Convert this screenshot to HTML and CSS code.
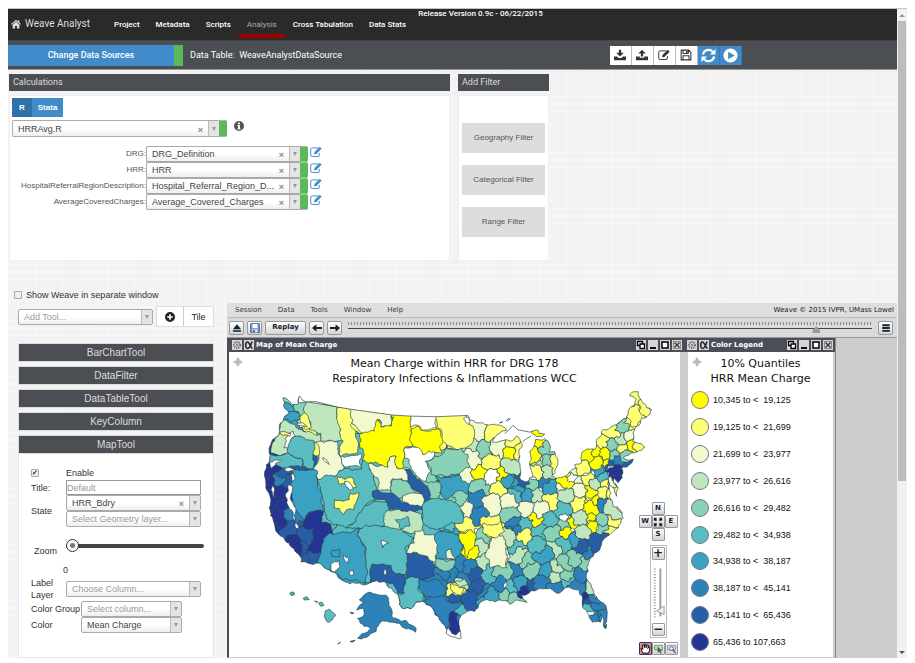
FILE: index.html
```html
<!DOCTYPE html>
<html lang="en">
<head>
<meta charset="utf-8">
<title>Weave Analyst</title>
<link rel="stylesheet" href="styles.css">
</head>
<body>
<svg class="defs" aria-hidden="true">
  <symbol id="i-home" viewBox="0 0 16 16"><path d="M8 1 0 8l1 1.3L8 3.400l7 5.900L16 8l-2.500-2.200V2h-2v2z"/><path d="M8 4.500 2.500 9v6H6.500v-4h3v4h4V9z"/></symbol>
  <symbol id="i-down" viewBox="0 0 16 16"><path d="M6.500 1h3v4H13L8 10 3 5h3.500z"/><path d="M0 10h4l2 2h4l2-2h4v5H0z"/></symbol>
  <symbol id="i-up" viewBox="0 0 16 16"><path d="M6.500 10h3V6H13L8 1 3 6h3.500z"/><path d="M0 10h5v1.500h6V10h5v5H0z"/></symbol>
  <symbol id="i-edit" viewBox="0 0 16 16"><path d="M11 2.500H3Q1 2.500 1 4.500v7.500q0 2 2 2h7.500q2 0 2-2V9.500" fill="none" stroke="currentColor" stroke-width="1.300"/><path d="M6 8 13 1l2.500 2.500-7 7L5.500 11z"/></symbol>
  <symbol id="i-save" viewBox="0 0 16 16"><path d="M1.500 1.500h10l3 3v10h-13zM4 14V9h8v5M4 2v4h7V2" fill="none" stroke="currentColor" stroke-width="1.400"/><path d="M8 2.500h2v3H8z"/></symbol>
  <symbol id="i-refresh" viewBox="0 0 16 16"><path d="M2 7a6.200 6.200 0 0 1 11-2.600M14 9a6.200 6.200 0 0 1-11 2.600" fill="none" stroke="currentColor" stroke-width="2.300"/><path d="M15.500 1v6H9.500zM.500 15V9h6z"/></symbol>
  <symbol id="i-play" viewBox="0 0 16 16"><path fill-rule="evenodd" d="M8 .500a7.500 7.500 0 1 0 0 15 7.500 7.500 0 0 0 0-15zM5.500 4v8l7-4z"/></symbol>
  <symbol id="i-info" viewBox="0 0 16 16"><path fill-rule="evenodd" d="M8 0a8 8 0 1 0 0 16A8 8 0 0 0 8 0zM6.500 2.500h3V5h-3zM5.500 6.500h4V12h1v1.500h-5V12h1V8h-1z"/></symbol>
  <symbol id="i-plus" viewBox="0 0 16 16"><path fill-rule="evenodd" d="M8 0a8 8 0 1 0 0 16A8 8 0 0 0 8 0zM6.700 3.500h2.600v3.200h3.200v2.600H9.300v3.200H6.700V9.300H3.500V6.700h3.200z"/></symbol>
  <symbol id="i-eject" viewBox="0 0 16 16"><path d="M8 2 14.500 10h-13zM1.500 11.500h13V14h-13z"/></symbol>
  <symbol id="i-disk" viewBox="0 0 16 16"><path d="M1 1h14v14H1z" fill="#7d9dca" stroke="#446499" stroke-width="1.500"/><path d="M4 1.500h8V8H4z" fill="#fff"/><path d="M4 10h8v5H4z" fill="#dfe6f0"/><path d="M5 11h3v4H5z" fill="#446499"/></symbol>
  <symbol id="i-left" viewBox="0 0 16 16"><path d="M0 8 7 2v4.500h9v3H7V14z"/></symbol>
  <symbol id="i-right" viewBox="0 0 16 16"><path d="M16 8 9 2v4.500H0v3h9V14z"/></symbol>
  <symbol id="i-menu" viewBox="0 0 16 16"><path d="M2 2h12v3H2zM2 6.500h12v3H2zM2 11h12v3H2z"/></symbol>
  <symbol id="i-gear" viewBox="0 0 10 10"><circle cx="5" cy="5" r="3" fill="none" stroke="#666" stroke-width="2" stroke-dasharray="1.200 1"/><circle cx="5" cy="5" r="1.200" fill="#888"/></symbol>
  <symbol id="i-alpha" viewBox="0 0 10 10"><path d="M8 1.500C7 5 6 8.500 3.500 8.500S1.200 2 3.500 2 6.500 8 8.500 8.500" fill="none" stroke="#222" stroke-width="1.500"/></symbol>
  <symbol id="i-copy" viewBox="0 0 10 10"><path d="M1.500 1.500h5v4h-5z" fill="#fff" stroke="#000" stroke-width="1.300"/><path d="M4 4h4.500v4.500H4z" fill="#fff" stroke="#000" stroke-width="1.300"/></symbol>
  <symbol id="i-min" viewBox="0 0 10 10"><path d="M2 7h6v2H2z"/></symbol>
  <symbol id="i-max" viewBox="0 0 10 10"><path d="M2 2h6v6H2z" fill="#fff" stroke="#000" stroke-width="1.500"/></symbol>
  <symbol id="i-close" viewBox="0 0 10 10"><path d="M1.500 1.500h7v7h-7z" fill="none" stroke="#444" stroke-dasharray="1 1"/><path d="m2.500 2.500 5 5M7.500 2.500l-5 5" stroke="#333" stroke-width="1.300"/></symbol>
  <symbol id="i-move" viewBox="0 0 10 10"><path d="M5 0 6.500 2v1.500H8L10 5 8 6.500H6.500V8L5 10 3.500 8V6.500H2L0 5l2-1.500h1.500V2z"/></symbol>
  <symbol id="i-fit" viewBox="0 0 12 12"><path d="M1 1h4L3.800 2.200 5 3.500 3.500 5 2.200 3.800 1 5zM11 1v4L9.800 3.800 8.500 5 7 3.500l1.200-1.300L7 1zM1 11V7l1.200 1.200L3.500 7 5 8.500 3.800 9.800 5 11zM11 11H7l1.200-1.200L7 8.500 8.500 7l1.300 1.200L11 7z"/></symbol>
  <symbol id="i-hand" viewBox="0 0 12 12"><path fill="#e98a8a" d="M0 0h12v12H0z"/><path d="M3 11 1 6l1.500-.500L3 7 2.500 2.500 4 2l1 3V1.500h1.500V5L8 2l1.300.500L8.500 6l1.500-2 1 .800L9.500 11z" fill="#fff" stroke="#000"/></symbol>
  <symbol id="i-sel" viewBox="0 0 12 12"><path d="M1.500 2.500h9v5h-9z" fill="#b4d8bd" stroke="#6b9c78"/><path d="M5 4v7l1.800-1.800L8.500 12l1-.600L8 9h2.500z" fill="#555"/></symbol>
  <symbol id="i-zoomsel" viewBox="0 0 12 12"><path d="M1.500 2.500h9v5h-9z" fill="#d8e0f4" stroke="#7b8cb8"/><circle cx="6" cy="6" r="2" fill="#fff" stroke="#556"/><path d="m7.500 7.500 3 3.500" stroke="#556" stroke-width="1.500"/></symbol>
</svg>

<div class="window">
<main class="page">
  <header class="nav">
    <a class="brand" href="#"><svg class="ic10"><use href="#i-home"/></svg>Weave Analyst</a>
    <nav class="links">
      <a href="#">Project</a><a href="#">Metadata</a><a href="#">Scripts</a><a class="active" href="#">Analysis</a><a href="#">Cross Tabulation</a><a href="#">Data Stats</a>
    </nav>
    <span class="release">Release Version 0.9c - 06/22/2015</span>
  </header>

  <div class="toolbar">
    <button class="source">Change Data Sources</button>
    <span class="table-name">Data Table:&nbsp; WeaveAnalystDataSource</span>
    <div class="actions">
      <button aria-label="Download"><svg><use href="#i-down"/></svg></button><button aria-label="Upload"><svg><use href="#i-up"/></svg></button><button aria-label="Edit"><svg><use href="#i-edit"/></svg></button><button aria-label="Save"><svg><use href="#i-save"/></svg></button><button class="blue" aria-label="Refresh"><svg><use href="#i-refresh"/></svg></button><button class="blue" aria-label="Run"><svg><use href="#i-play"/></svg></button>
    </div>
  </div>

  <div class="panels">
    <section class="calc">
      <h2>Calculations</h2>
      <div class="panel-body">
        <div class="seg"><button class="on">R</button><button>Stata</button></div>
        <div class="script-row">
          <div class="combo ok"><select aria-label="Script"><option>HRRAvg.R</option></select><button class="clear" aria-label="Clear script"></button><span class="arrow"></span></div>
          <svg class="ic10 info"><use href="#i-info"/></svg>
        </div>
        <div class="params">
          <label for="p1">DRG:</label><div class="combo ok"><select id="p1"><option>DRG_Definition</option></select><button class="clear" aria-label="Clear DRG"></button><span class="arrow"></span></div><a href="#" aria-label="Edit DRG"><svg><use href="#i-edit"/></svg></a>
          <label for="p2">HRR:</label><div class="combo ok"><select id="p2"><option>HRR</option></select><button class="clear" aria-label="Clear HRR"></button><span class="arrow"></span></div><a href="#" aria-label="Edit HRR"><svg><use href="#i-edit"/></svg></a>
          <label for="p3">HospitalReferralRegionDescription:</label><div class="combo ok"><select id="p3"><option>Hospital_Referral_Region_D...</option></select><button class="clear" aria-label="Clear region"></button><span class="arrow"></span></div><a href="#" aria-label="Edit region"><svg><use href="#i-edit"/></svg></a>
          <label for="p4">AverageCoveredCharges:</label><div class="combo ok"><select id="p4"><option>Average_Covered_Charges</option></select><button class="clear" aria-label="Clear charges"></button><span class="arrow"></span></div><a href="#" aria-label="Edit charges"><svg><use href="#i-edit"/></svg></a>
        </div>
      </div>
    </section>
    <section class="filters">
      <h2>Add Filter</h2>
      <div class="panel-body">
        <button>Geography Filter</button><button>Categorical Filter</button><button>Range Filter</button>
      </div>
    </section>
  </div>

  <div class="lower">
    <aside class="side">
      <label class="separate"><input type="checkbox">Show Weave in separate window</label>
      <div class="add-row">
        <div class="combo muted"><select aria-label="Add Tool"><option>Add Tool...</option></select><span class="arrow"></span></div>
        <div class="add-buttons"><button aria-label="Add"><svg class="ic10"><use href="#i-plus"/></svg></button><button>Tile</button></div>
      </div>
      <div class="accordion">
        <button>BarChartTool</button><button>DataFilter</button><button>DataTableTool</button><button>KeyColumn</button><button>MapTool</button>
        <div class="map-form">
          <div class="row"><span class="name"><input id="en" type="checkbox" checked></span><label for="en">Enable</label></div>
          <div class="row"><label class="name" for="ti">Title:</label><input id="ti" class="text" type="text" placeholder="Default"></div>
          <div class="row"><label class="name" for="st">State</label>
            <div class="stack">
              <div class="combo"><select id="st"><option>HRR_Bdry</option></select><button class="clear" aria-label="Clear state"></button><span class="arrow"></span></div>
              <div class="combo muted"><select aria-label="Geometry layer"><option>Select Geometry layer...</option></select><span class="arrow"></span></div>
            </div></div>
          <div class="row zoom-row"><label class="name" for="zo">Zoom</label><div class="zoom-box"><input id="zo" type="range" min="0" max="18" value="0"></div></div>
          <output class="zoom-value" for="zo">0</output>
          <div class="row"><label class="name" for="la">Label Layer</label><div class="combo muted"><select id="la"><option>Choose Column...</option></select><span class="arrow"></span></div></div>
          <div class="row wide"><label class="name" for="cg">Color Group</label><div class="combo muted"><select id="cg"><option>Select column...</option></select><span class="arrow"></span></div></div>
          <div class="row wide"><label class="name" for="co">Color</label><div class="combo"><select id="co"><option>Mean Charge</option></select><span class="arrow"></span></div></div>
        </div>
      </div>
    </aside>

    <section class="weave">
      <div class="menubar"><a href="#">Session</a><a href="#">Data</a><a href="#">Tools</a><a href="#">Window</a><a href="#">Help</a><span>Weave © 2015 IVPR, UMass Lowel</span></div>
      <div class="history">
        <button class="fx" aria-label="Eject"><svg><use href="#i-eject"/></svg></button>
        <button class="fx" aria-label="Save session"><svg><use href="#i-disk"/></svg></button>
        <button class="fx replay">Replay</button>
        <button class="fx" aria-label="Undo"><svg><use href="#i-left"/></svg></button>
        <button class="fx" aria-label="Redo"><svg><use href="#i-right"/></svg></button>
        <div class="timeline"><input type="range" aria-label="Session history" min="0" max="100" value="90"></div>
        <button class="fx" aria-label="Menu"><svg><use href="#i-menu"/></svg></button>
      </div>
      <div class="desk">
        <article class="win map-win">
          <header><svg class="tb"><use href="#i-gear"/></svg><svg class="tb"><use href="#i-alpha"/></svg><h3>Map of Mean Charge</h3><svg class="tb"><use href="#i-copy"/></svg><svg class="tb"><use href="#i-min"/></svg><svg class="tb"><use href="#i-max"/></svg><svg class="tb"><use href="#i-close"/></svg></header>
          <div class="win-body">
            <svg class="move"><use href="#i-move"/></svg>
            <h4>Mean Charge within HRR for DRG 178<br>Respiratory Infections &amp; Inflammations WCC</h4>
            <svg class="usmap" id="usmap" viewBox="-60 15 1350 812" role="img" aria-label="Mean charge by hospital referral region"></svg>
            <div class="map-tools">
              <div class="compass">
                <button class="fx n">N</button><button class="fx w">W</button><button class="fx c" aria-label="Fit"><svg><use href="#i-fit"/></svg></button><button class="fx e">E</button><button class="fx s">S</button>
              </div>
              <div class="zoomer"><button class="fx">+</button>
                <svg class="vslide" viewBox="0 0 16 56"><path d="M4 3v52" stroke="#888" stroke-width="2" stroke-dasharray="1 2"/><path d="M10 3v51" stroke="#999" stroke-width="2"/><path d="m6 48 8-5v9z" fill="#eee" stroke="#999"/></svg>
                <button class="fx">−</button></div>
              <div class="modes"><button class="fx picked" aria-label="Pan"><svg><use href="#i-hand"/></svg></button><button class="fx" aria-label="Select"><svg><use href="#i-sel"/></svg></button><button class="fx" aria-label="Zoom to area"><svg><use href="#i-zoomsel"/></svg></button></div>
            </div>
          </div>
        </article>
        <article class="win legend-win">
          <header><svg class="tb"><use href="#i-gear"/></svg><svg class="tb"><use href="#i-alpha"/></svg><h3>Color Legend</h3><svg class="tb"><use href="#i-copy"/></svg><svg class="tb"><use href="#i-min"/></svg><svg class="tb"><use href="#i-max"/></svg><svg class="tb"><use href="#i-close"/></svg></header>
          <div class="win-body">
            <svg class="move"><use href="#i-move"/></svg>
            <h4>10% Quantiles<br>HRR Mean Charge</h4>
            <ul>
              <li class="q0">10,345 to &lt;&nbsp; 19,125</li><li class="q1">19,125 to &lt;&nbsp; 21,699</li><li class="q2">21,699 to &lt;&nbsp; 23,977</li><li class="q3">23,977 to &lt;&nbsp; 26,616</li><li class="q4">26,616 to &lt;&nbsp; 29,482</li><li class="q5">29,482 to &lt;&nbsp; 34,938</li><li class="q6">34,938 to &lt;&nbsp; 38,187</li><li class="q7">38,187 to &lt;&nbsp; 45,141</li><li class="q8">45,141 to &lt;&nbsp; 65,436</li><li class="q9">65,436 to 107,663</li>
            </ul>
          </div>
        </article>
      </div>
    </section>
  </div>
</main>
<div class="scroll" aria-hidden="true"><span class="up"></span><span class="thumb"></span><span class="down"></span></div>
</div>
<script src="map.js"></script>
</body>
</html>
```
FILE: styles.css
```css
* { box-sizing: border-box; }
body { margin: 0; padding: 8px 8px 6px; background: #fff; color: #333; font: 9px/12px "Liberation Sans", Arial, sans-serif; }
button, input, select { font: inherit; color: inherit; margin: 0; padding: 0; border: 0; border-radius: 0; background: none; }
h2, h3, h4, ul { margin: 0; padding: 0; font-weight: normal; list-style: none; }
a { color: inherit; text-decoration: none; }
svg { display: block; fill: currentColor; }
.defs { display: none; }
.ic10 { width: 10px; height: 10px; }
.window { display: flex; min-height: calc(100vh - 14px); border-top: 1px solid #c4c4c4; }
.page { flex: 1; min-width: 0; display: flex; flex-direction: column; background: #f2f2f2; background-image: repeating-linear-gradient(0deg, #fff3 0 2px, transparent 2px 7px), repeating-linear-gradient(90deg, #fff3 0 2px, transparent 2px 9px); }

.nav { position: relative; display: flex; height: 32px; background: #2a2a2a; color: #fff; border-bottom: 1px solid #444; font-family: Roboto, sans-serif; }
.brand { display: flex; align-items: center; gap: 4px; padding: 0 4px 2px 3px; font-size: 10px; color: #ddd; }
.links { display: flex; font-size: 8px; font-weight: 500; padding-left: 12px; }
.links a { padding: 10px 8px 0; height: 29px; }
.links .active { color: #aaa; font-weight: 400; border-bottom: 4px solid #a00000; }
.release { position: absolute; left: 0; right: 0; top: -1px; padding-left: 56px; text-align: center; font-size: 8px; font-weight: 500; pointer-events: none; }

.toolbar { display: flex; align-items: center; height: 29px; background: #4b4e53; border-bottom: 1px solid #999; color: #fff; font: 9px/12px Roboto, sans-serif; }
.source { width: 175px; height: 21px; background: #428bca; border-right: 9px solid #5cb85c; font-weight: 500; }
.table-name { margin-left: 7px; }
.actions { display: flex; margin-left: 268px; }
.actions button { width: 22px; height: 19px; display: grid; place-items: center; background: #fff; color: #333; border-right: 1px solid #bbb; }
.actions svg { width: 12px; height: 12px; }
.actions .blue { background: #428bca; color: #fff; border-color: #3478b4; }
.actions .blue svg { width: 15px; height: 15px; }

.panels { display: flex; gap: 8px; padding: 4px 1px 0; }
.panels h2 { background: #4b4e53; color: #ddd; font: 9px/17px Roboto, sans-serif; padding-left: 4px; margin-bottom: 4px; }
.panel-body { background: #fff; min-height: 166px; border: 1px solid #eee; }
.calc { width: 441px; }
.calc .panel-body { padding: 2px; }
.filters { width: 91px; }
.filters .panel-body { display: flex; flex-direction: column; gap: 12px; padding: 27px 3px 0; }
.filters button { height: 30px; background: #ddd; color: #555; font-size: 8px; }
.seg { display: flex; }
.seg button { height: 19px; padding: 0 6px; background: #428bca; color: #fff; font-size: 8px; font-weight: 700; }
.seg .on { background: #3071a9; padding: 0 7px; }
.combo { display: flex; flex: 1; min-width: 0; height: 16px; border: 1px solid #aaa; border-radius: 2px; background: linear-gradient(#fff 50%, #eee); }
.combo select { flex: 1; min-width: 0; appearance: none; padding-left: 5px; color: #444; }
.combo.muted select { color: #999; }
.combo.ok { border-right: 8px solid #5cb85c; border-radius: 2px; }
.arrow { width: 11px; border-left: 1px solid #bbb; background: #e4e4e4; display: grid; place-items: center; }
.arrow::after { content: ""; border: 2px solid transparent; border-top: 4px solid #999; border-bottom: 0; }
.clear { width: 15px; display: grid; place-items: center; }
.clear::after { content: "×"; font: bold 9px/9px "Liberation Sans", sans-serif; color: #888; padding-top: 3px; }
.script-row { display: flex; gap: 7px; margin-top: 3px; }
.script-row .combo { flex: 0 0 215px; height: 17px; }
.info { color: #555; margin-top: 1px; }
.params { display: grid; grid-template-columns: 134px 162px 12px; column-gap: 0; margin-top: 9px; color: #555; }
.params label { text-align: right; font-size: 8px; line-height: 15px; white-space: nowrap; justify-self: end; }
.params .combo { height: 16px; }
.params a { color: #428bca; padding-left: 2px; }
.params a svg { width: 12px; height: 12px; }

.lower { display: flex; flex: 1; padding-top: 28px; }
.side { width: 219px; display: flex; flex-direction: column; padding: 0 13px 0 10px; }
.separate { display: flex; align-items: center; gap: 4px; margin-left: -4px; font-size: 9px; }
input[type="checkbox"] { appearance: none; display: grid; place-items: center; width: 8px; height: 8px; border: 1px solid #aaa; border-radius: 1px; background: #eee; }
input[type="checkbox"]:checked::after { content: "✔"; font: 7px/6px "DejaVu Sans", sans-serif; color: #333; }
.add-row { display: flex; align-items: center; gap: 3px; margin-top: 5px; }
.add-buttons { display: flex; border: 1px solid #ddd; background: #fff; }
.add-buttons button { height: 19px; width: 26px; display: grid; place-items: center; color: #222; }
.add-buttons button + button { width: 30px; border-left: 1px solid #ccc; }
.accordion { flex: 1; display: flex; flex-direction: column; gap: 4px; margin-top: 16px; }
.accordion > button { height: 19px; border: 1px solid #ddd; background: #4b4e53; color: #ddd; font-size: 10px; line-height: 12px; }
.map-form { flex: 1; margin-top: -4px; padding: 12px 12px 0; background: #fff; border: 1px solid #e4e4e4; border-top: 0; }
.row { display: flex; align-items: center; min-height: 14px; }
.name { flex: 0 0 35px; }
.row.wide .name { flex-basis: 50px; white-space: nowrap; }
.row.wide .combo { flex: 0 0 101px; }
.text { flex: 1; min-width: 0; height: 15px; border: 1px solid #999; background: #fff; }
.text::placeholder { color: #999; opacity: 1; }
.stack { flex: 1; min-width: 0; display: flex; flex-direction: column; }
.stack .combo { flex: none; }
.zoom-row { height: 36px; align-items: flex-end; }
.zoom-row .name { padding: 0 0 6px 3px; }
.zoom-box { flex: 1; margin-right: -3px; padding-bottom: 10px; }
.zoom-box input { display: block; width: 100%; height: 14px; appearance: none; }
.zoom-box input::-webkit-slider-runnable-track { height: 4px; border-radius: 2px; background: #444; }
.zoom-box input::-webkit-slider-thumb { appearance: none; width: 13px; height: 13px; margin-top: -5px; border: 1px solid #333; border-radius: 50%; background: radial-gradient(#777 0 2px, #fff 3px); }
.zoom-value { display: block; margin-left: 32px; line-height: 14px; }

.weave { flex: 1; min-width: 0; margin-top: 14px; display: flex; flex-direction: column; background: #ccc; font-family: "DejaVu Sans", sans-serif; }
.menubar { display: flex; gap: 16px; height: 15px; padding: 0 3px 0 8px; line-height: 14px; font-size: 7px; color: #2b3f40; background: #dedede; border-bottom: 1px solid #bbb; }
.menubar span { margin-left: auto; color: #222; }
.history { display: flex; align-items: center; gap: 3px; height: 20px; padding: 0 4px 0 2px; background: #dadada; border-bottom: 1px solid #999; }
.fx { display: grid; place-items: center; width: 15px; height: 14px; border: 1px solid #999; border-radius: 2px; background: linear-gradient(#fff, #d4d4d4); color: #123; font: bold 7px/7px "DejaVu Sans", sans-serif; }
.fx svg { width: 10px; height: 10px; }
.replay { width: 41px; }
.timeline { flex: 1; height: 16px; margin: 0 3px; padding-top: 3px; background: repeating-linear-gradient(90deg, #888 0 1px, transparent 1px 3px) 0 2px / 100% 3px no-repeat; }
.timeline input { display: block; width: 100%; height: 12px; appearance: none; }
.timeline input::-webkit-slider-runnable-track { height: 1px; background: #444; }
.timeline input::-webkit-slider-thumb { appearance: none; width: 8px; height: 7px; margin-top: -2px; background: #999; clip-path: polygon(50% 0, 100% 70%, 100% 100%, 0 100%, 0 70%); }
.desk { flex: 1; display: flex; padding-right: 61px; }
.win { display: flex; flex-direction: column; }
.win header { display: flex; align-items: center; gap: 2px; height: 14px; padding: 0 2px 0 3px; background: #4b4e58; color: #fff; }
.win h3 { flex: 1; font: bold 7px/12px "DejaVu Sans", sans-serif; white-space: nowrap; }
.tb { width: 10px; height: 10px; background: #d5d5d5; color: #111; }
.win-body { position: relative; flex: 1; display: flex; flex-direction: column; background: #fff; color: #111; }
.win h4 { font: 11px/15px "DejaVu Sans", sans-serif; text-align: center; padding-top: 4px; white-space: nowrap; }
.move { position: absolute; left: 4px; top: 5px; width: 10px; height: 10px; color: #bbb; }
.map-win { flex: 1; min-width: 0; border-left: 2px solid #4b4e58; border-bottom: 1px solid #ccc; }
.map-win .win-body { margin-right: 4px; }
.usmap { display: block; width: 100%; height: auto; }
.map-tools { position: absolute; right: 2px; bottom: 2px; width: 40px; display: flex; flex-direction: column; align-items: center; gap: 4px; }
.compass { display: grid; grid-template-columns: repeat(3, 13px); grid-template-rows: repeat(3, 13px); }
.compass .fx, .modes .fx, .zoomer .fx { width: 13px; height: 13px; border-radius: 1px; }
.compass .n, .compass .s { grid-column: 2; }
.compass .w { grid-column: 1; grid-row: 2; }
.compass .c { grid-row: 2; }
.compass .e { grid-row: 2; }
.zoomer { padding: 1px; border: 1px solid #bbb; background: #fff; width: 17px; height: 93px; display: flex; flex-direction: column; justify-content: space-between; align-items: center; }
.zoomer .fx { font-size: 12px; }
.vslide { width: 15px; height: 56px; }
.modes { display: flex; }
.modes .fx svg { width: 11px; height: 11px; }
.modes .picked { border-color: #336; }
.legend-win { width: 152px; border-right: 1px solid #888; }
.legend-win .win-body { margin: 0 2px 1px 4px; }
.legend-win ul { flex: 1; display: flex; flex-direction: column; padding: 1px 3px 2px; }
.legend-win li { flex: 1; display: flex; align-items: center; gap: 4px; font: 9px/12px "Liberation Sans", sans-serif; }
.legend-win li::before { content: ""; width: 16px; height: 16px; border: 1px solid #778; border-radius: 50%; background: var(--c); }
.q0 { --c: #ffff00; } .q1 { --c: #ffff73; } .q2 { --c: #f2f9cf; } .q3 { --c: #c0e6bd; } .q4 { --c: #8ad2b6; }
.q5 { --c: #58bcc0; } .q6 { --c: #3aa1c2; } .q7 { --c: #2d83b9; } .q8 { --c: #285da8; } .q9 { --c: #253494; } .qw { --c: #fff; }
#usmap path { fill: var(--c); stroke: #29434a; stroke-width: 2; }
#usmap .coast { fill: none; }

.scroll { width: 10px; display: flex; flex-direction: column; background: #f1f1f1; }
.up, .down { height: 12px; display: grid; place-items: center; }
.up::after { content: ""; border: 3px solid transparent; border-bottom-color: #999; border-top: 0; }
.down::after { content: ""; border: 3px solid transparent; border-top-color: #555; border-bottom: 0; }
.thumb { height: 460px; margin: 0 1px; background: #bcbcbc; }
.down { margin-top: auto; }
```
FILE: map.js
```js
// Hospital referral regions: cells are grown around region centres, then larger regions are drawn over them.
const coast = "102,50 125,66 145,72 150,45 160,58 172,62 200,62 265,78 300,84 430,102 480,105 560,107 655,103 660,117 695,125 740,132 770,148 735,168 728,182 760,178 785,180 800,165 812,180 818,195 808,235 810,290 835,300 850,285 840,250 840,210 855,190 858,175 885,172 900,190 898,215 915,212 925,240 920,260 905,285 920,292 945,285 980,262 975,250 995,245 995,220 1000,210 1035,205 1040,175 1060,145 1090,135 1105,125 1130,112 1135,90 1155,70 1160,55 1140,45 1145,35 1165,32 1175,60 1190,80 1205,85 1200,100 1175,110 1170,130 1150,155 1148,180 1160,185 1185,198 1165,210 1145,215 1120,230 1150,235 1120,255 1115,262 1117,290 1105,305 1095,290 1090,300 1105,320 1100,345 1090,320 1075,300 1078,320 1080,350 1090,375 1110,385 1120,410 1105,440 1080,460 1060,475 1055,490 1030,525 1015,545 1015,570 1012,595 1030,625 1055,662 1072,690 1070,722 1065,740 1062,715 1052,698 1052,722 1028,722 1018,702 1000,680 998,645 985,625 960,618 930,635 900,620 845,627 815,640 832,663 800,655 780,668 750,655 720,658 695,660 675,690 645,695 628,720 630,740 635,770 590,755 575,720 545,675 520,660 500,663 485,682 450,670 445,638 430,625 405,600 360,605 320,605 260,575 245,570 205,545 155,542 150,520 120,485 105,470 85,455 75,425 60,380 50,320 48,290 50,265 62,240 60,215 65,190 85,165 95,125 105,110 120,97 105,80";
const seeds = "620,130,1 680,150,2 730,150,1 660,195,3 710,208,4 675,235,2 745,200,2 795,190,1 787,215,0 808,215,1 785,255,3 720,245,1 695,272,0 725,287,w 650,287,2 755,285,0 695,320,4 620,300,6 750,320,1 785,305,6 815,300,8 805,330,6 770,300,6 795,340,5 835,340,6 685,360,7 685,395,7 725,370,2 650,385,2 620,345,4 610,400,5 780,360,2 830,385,2 860,340,3 845,310,4 880,305,7 900,320,6 870,385,2 855,412,0 905,355,1 935,385,5 900,420,5 940,320,2 955,300,0 980,360,1 985,325,2 950,340,3 1000,265,1 985,290,2 1015,290,1 1025,330,0 1030,355,0 1025,385,0 1060,370,7 1040,310,3 1055,290,5 1045,265,6 1090,265,9 1105,285,9 1080,250,8 1100,240,7 1065,240,0 1015,225,0 1030,210,0 1040,245,0 1070,220,0 1055,180,1 1095,150,1 1090,195,4 1090,225,4 1117,140,4 1115,175,3 1140,165,2 1150,130,1 1165,100,1 1160,45,1 1190,90,1 1145,195,0 1120,200,1 1130,222,4 1175,198,1 1065,310,1 1090,330,1 1085,310,2 1060,330,1 1085,385,3 1085,415,1 1055,420,4 1020,420,0 995,415,3 950,430,4 975,430,0 785,400,4 800,430,7 730,435,1 660,440,1 825,430,5 870,185,0 855,225,0 885,205,4 890,240,4 915,245,1 865,275,1 890,270,3 870,245,3 655,470,0 660,510,0 620,480,6 700,470,4 730,440,1 690,500,3 745,515,2 745,490,2 775,470,3 800,440,7 825,465,1 870,450,5 860,490,5 805,500,5 955,455,0 910,455,4 1000,450,3 1030,430,0 1055,435,4 1080,455,1 990,495,8 1040,480,8 1025,510,7 940,490,5 970,475,6 1000,550,4 975,530,4 945,545,4 910,505,3 880,520,6 810,525,3 830,540,4 845,565,4 800,570,7 760,575,4 720,580,5 705,545,3 660,560,7 675,575,8 630,550,7 630,605,3 620,625,1 685,620,8 660,655,8 705,635,7 730,640,6 760,640,4 790,655,4 750,610,7 785,620,5 810,610,6 825,625,9 855,600,8 890,570,6 885,600,7 915,590,3 925,560,3 955,600,5 920,615,7 950,580,4 995,585,7 990,610,7 1025,605,7 1030,630,3 1010,660,8 1030,650,7 1015,680,5 1040,665,7 1040,710,7 1065,700,7 1005,655,9 635,690,5 615,720,9 620,760,7 605,575,7 580,300,6 560,340,4 600,350,4 440,315,4 530,430,5 560,400,5 590,260,4 320,280,5 240,330,5 250,400,5 370,400,5 300,440,5 380,450,5 440,510,5 380,530,5 280,500,6 230,520,6 330,560,6 55,300,9 65,350,9 95,330,9 110,370,9 85,400,9 120,400,7 95,420,9 75,430,9 120,440,8 140,470,9 170,470,8 150,500,8 200,520,8 210,490,9 175,530,8 135,480,9 95,275,8 115,300,8 90,290,7 60,270,9 590,545,4 560,600,7 625,655,8 580,570,7 560,660,7 640,590,7 500,650,5 105,70,4 160,75,4 125,105,6 170,115,1".split(" ").map(s => s.split(",")).map(([x, y, q]) => ({ x: +x, y: +y, q }));
const regions = [
  ["3", "172,62 265,78 262,110 275,140 280,178 245,178 215,182 215,158 180,145 185,130 165,92"],
  ["3", "95,115 120,125 180,150 215,158 215,182 150,165 125,165 118,215 65,215 70,185 90,160"],
  ["6", "104,98 128,92 152,100 150,116 125,122 108,112"], ["1", "152,108 165,95 178,112 186,140 170,146 155,130"],
  ["w", "145,125 160,124 175,138 160,135 148,134"], ["w", "120,155 132,150 138,165 124,178 118,202 104,200 112,180 108,172"], ["1", "92,153 125,158 122,166 96,160"],
  ["5", "125,175 150,165 195,180 192,262 160,255 160,235 115,215"],
  ["5", "60,215 115,215 160,235 160,260 130,255 62,245"],
  ["w", "62,242 80,236 98,238 80,246 66,262"],
  ["1", "265,78 312,82 312,120 304,130 320,150 325,215 290,218 272,225 270,200 282,180 275,145 262,110"],
  ["2", "300,78 425,96 420,138 395,138 390,115 383,116 380,145 330,150 310,130"],
  ["2", "200,182 245,178 265,182 275,225 285,262 260,285 235,285 210,297 192,262"], ["w", "220,230 230,235 240,250 228,242"],
  ["w", "272,225 300,225 335,218 338,262 290,258"],
  ["5", "285,262 338,262 340,235 357,240 360,265 372,275 375,300 385,330 370,335 380,355 345,375 340,405 330,405 290,440 250,430 225,390 215,330 205,295 260,285"],
  ["6", "130,262 192,265 205,270 205,300 215,330 215,360 225,385 215,390 180,392 165,420 150,400 138,380 125,330 135,290"],
  ["w", "100,262 118,258 135,265 138,292 128,300 130,268 112,270"], ["w", "120,310 130,315 128,360 140,390 150,440 140,442 132,400 120,380"], ["w", "68,310 76,320 78,350 70,340"],
  ["2", "358,245 400,252 415,258 420,230 440,225 445,262 480,262 475,300 460,300 458,292 430,292 425,328 385,325 385,290"],
  ["w", "480,95 568,95 560,140 520,148 510,135 480,138"],
  ["0", "320,150 330,158 375,150 378,132 384,115 395,138 425,135 430,96 488,96 485,150 490,195 465,200 465,230 460,262 443,260 440,225 420,230 415,258 390,250 340,235 342,205 330,200 335,175"],
  ["0", "485,150 510,135 515,148 570,145 582,180 570,195 580,215 555,215 520,222 500,200 490,195 482,180"],
  ["1", "563,95 655,95 655,125 675,150 665,190 630,205 600,195 580,180 575,145 560,142"],
  ["w", "465,200 500,198 520,220 555,212 555,225 530,240 545,270 535,280 530,300 515,295 485,265 480,235 465,230"], ["w", "642,112 655,108 660,130 650,125"],
  ["4", "555,225 570,225 590,200 635,200 655,220 660,258 630,278 545,280 540,255 528,240"],
  ["6", "558,285 630,280 640,300 660,310 655,340 620,330 590,355 575,340 578,315"],
  ["4", "425,328 430,295 455,295 480,305 510,330 490,340 460,345 445,355 425,345"],
  ["8", "465,265 485,268 515,300 535,315 540,350 556,360 555,380 540,395 520,385 470,395 440,385 420,385 405,355 370,345 370,330 400,335 425,335 460,365 520,370 515,340 490,325 475,300"],
  ["2", "460,345 485,335 520,340 518,375 480,370 460,362"],
  ["1", "265,287 310,290 322,318 300,325 288,305 268,308"], ["w", "286,300 300,303 312,322 302,328 290,315"],
  ["1", "255,355 300,355 303,335 330,335 322,360 315,385 290,388 283,400 270,382 255,380"],
  ["5", "345,375 385,360 415,365 420,388 405,430 360,450 330,440 290,440 320,420"],
  ["3", "410,390 440,385 520,395 518,455 405,445 405,430"], ["5", "438,415 475,405 480,435 455,445"],
  ["5", "520,370 620,365 640,400 640,425 520,425"],
  ["9", "165,420 180,395 200,388 225,390 220,425 245,430 243,490 225,505 190,515 170,505 200,480 195,440 165,440"],
  ["6", "225,470 245,455 300,455 330,442 328,465 335,475 350,500 350,605 300,598 260,575 205,545 215,515"],
  ["6", "250,505 272,505 272,525 248,525"], ["w", "245,548 270,538 272,555 255,572 245,565"], ["w", "282,520 298,532 296,545 285,535"], ["w", "302,568 313,570 312,582 300,578"],
  ["5", "330,442 350,430 405,435 470,455 495,470 480,490 465,500 475,515 470,580 430,575 370,548 362,605 345,605 350,500 325,465"], ["w", "395,478 418,485 405,490 400,500"],
  ["8", "370,548 395,548 425,552 440,578 465,580 465,635 445,635 430,605 362,602 362,570"], ["w", "403,565 411,566 410,580 403,580"],
  ["8", "470,515 510,518 525,522 550,530 550,585 525,590 520,600 475,592 470,580"],
  ["2", "495,450 520,445 525,460 560,465 560,545 535,525 512,520 470,515 480,490 495,485"],
  ["6", "560,455 625,460 630,480 640,500 620,530 560,535"], ["2", "590,510 605,503 608,520 618,535 592,535"], ["4", "562,530 615,535 612,560 585,570 560,555"],
  ["5", "470,595 510,590 505,620 522,640 520,660 500,663 485,682 450,670 445,638 465,635"],
  ["7", "510,595 550,595 575,600 590,625 580,645 525,645 508,620"],
  ["7", "520,660 545,645 585,645 605,665 640,660 600,710 588,755 575,720 545,675"],
  ["9", "598,712 605,690 625,695 630,740 620,760 600,745"], ["1", "602,608 625,612 645,618 635,642 610,632"], ["3", "615,600 645,590 655,610 630,620"],
  ["0", "628,458 665,445 680,468 675,490 662,505 655,530 645,500 635,485"],
  ["2", "725,468 762,465 770,495 772,560 722,560 720,535 705,525 720,500"],
  ["1", "700,425 755,420 765,450 735,470 700,455"]
];
const islands = [
  ["7", "330,655 345,640 360,632 385,640 412,642 425,680 430,710 455,720 470,717 485,730 500,740 498,752 470,742 450,725 425,722 400,718 380,750 350,768 325,770 355,752 365,740 345,735 325,710 345,700 340,680 322,685 328,675 345,665"],
  ["5", "228,688 240,683 260,702 245,718 238,723 225,705"], ["5", "122,635 134,632 136,640 126,642"], ["5", "162,650 172,645 180,655 166,656"], ["5", "208,665 218,662 224,672 214,674"], ["5", "196,658 206,660 202,664"],
  ["7", "302,692 314,694 308,698"], ["w", "265,787 274,782 270,786"], ["7", "302,780 318,776 308,782"],
  ["0", "845,155 855,148 865,148 868,157 885,160 862,167"], ["w", "750,125 760,122 752,126"], ["w", "770,118 782,113 774,120"],
  ["8", "1120,250 1150,235 1138,250 1115,260"], ["8", "1065,735 1070,728 1068,742"]
];
const parse = s => s.split(" ").map(p => p.split(",").map(Number));
const noise = (a, b) => { const v = Math.sin(a * 12.9898 + b * 78.233) * 43758.5453; return v - Math.floor(v) - 0.5; };
const northern = p => p[1] < 110 && p[0] > 165 && p[0] < 670;
// Splits an edge into a ragged line; the same edge gives the same line from either side.
function ragged(a, b, amount) {
  if (northern(a) && northern(b)) return [b];
  const swap = a[0] > b[0] || (a[0] === b[0] && a[1] > b[1]);
  const split = (p, q, depth) => {
    const len = Math.hypot(q[0] - p[0], q[1] - p[1]);
    if (len < 9 || !depth) return [q];
    const n = noise(Math.round(p[0] + q[0]), Math.round(p[1] + q[1])) * amount;
    const m = [(p[0] + q[0]) / 2 - (q[1] - p[1]) * n, (p[1] + q[1]) / 2 + (q[0] - p[0]) * n];
    return split(p, m, depth - 1).concat(split(m, q, depth - 1));
  };
  if (!swap) return split(a, b, 4);
  return split(b, a, 4).reverse().slice(1).concat([b]);
}
const outline = (pts, amount) => "M" + pts.flatMap((p, i) => ragged(p, pts[(i + 1) % pts.length], amount)).map(p => p[0].toFixed(1) + " " + p[1].toFixed(1)).join("L") + "Z";
const shape = (q, d) => `<path class="q${q}" d="${d}"/>`;
function cell(s) {
  let poly = [[20, 20], [1230, 20], [1230, 800], [20, 800]];
  for (const t of seeds) {
    if (t === s || (t.x === s.x && t.y === s.y)) continue;
    const dx = t.x - s.x, dy = t.y - s.y, k = (t.x * t.x + t.y * t.y - s.x * s.x - s.y * s.y) / 2;
    const side = p => p[0] * dx + p[1] * dy - k, out = [];
    poly.forEach((p, i) => {
      const n = poly[(i + 1) % poly.length], a = side(p), b = side(n);
      if (a <= 0) out.push(p);
      if (a * b < 0) { const f = a / (a - b); out.push([p[0] + (n[0] - p[0]) * f, p[1] + (n[1] - p[1]) * f]); }
    });
    poly = out;
  }
  return poly.map(p => p.map(v => Math.round(v)));
}
const coastPath = outline(parse(coast), 0.35);
document.getElementById("usmap").innerHTML =
  `<clipPath id="land"><path d="${coastPath}"/></clipPath><g clip-path="url(#land)">` +
  seeds.map(s => shape(s.q, outline(cell(s), 0.7))).join("") +
  regions.map(([q, p]) => shape(q, outline(parse(p), 0.35))).join("") + "</g>" +
  `<path class="coast" d="${coastPath}"/><path class="coast" d="M765 157L775 150 790 133 805 146 840 153 850 150M818 182L835 170 845 165"/>` +
  islands.map(([q, p]) => shape(q, outline(parse(p), 0.3))).join("");
```
